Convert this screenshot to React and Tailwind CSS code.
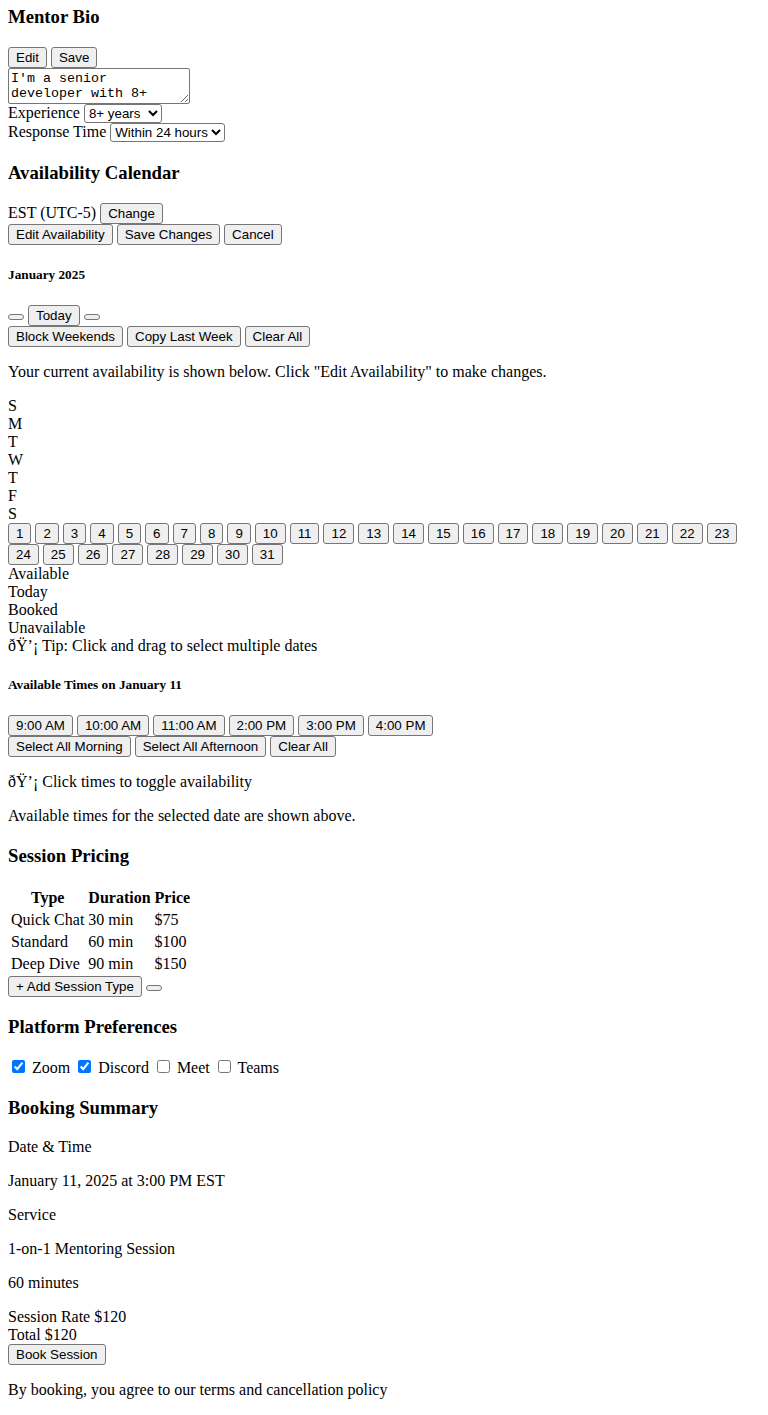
import { useState } from 'react';

const btn =
  "inline-block bg-[#efefef] border border-[#767676] rounded-[3px] px-[7px] py-[2px] font-['Liberation_Sans',Arial,sans-serif] text-[13.333px] leading-[normal] text-black";
const sel =
  "bg-white border border-[#767676] rounded-[3px] font-['Liberation_Sans',Arial,sans-serif] text-[13.333px] leading-[normal] text-black";
const h3 = 'text-[18.72px] font-bold leading-[normal] my-[18.72px]';
const h5 = 'text-[13.28px] font-bold leading-[normal] my-[22.18px]';

const days = ['S', 'M', 'T', 'W', 'T', 'F', 'S'];
const dates = Array.from({ length: 31 }, (_, i) => i + 1);
const times = ['9:00 AM', '10:00 AM', '11:00 AM', '2:00 PM', '3:00 PM', '4:00 PM'];
const sessions = [
  ['Quick Chat', '30 min', '$75'],
  ['Standard', '60 min', '$100'],
  ['Deep Dive', '90 min', '$150'],
];
const platforms = [
  ['Zoom', true],
  ['Discord', true],
  ['Meet', false],
  ['Teams', false],
];

export default function App() {
  const [bio, setBio] = useState(
    "I'm a senior developer with 8+ years of experience building web applications."
  );

  return (
    <div className="px-2 pb-[16px] font-['Liberation_Serif','Times_New_Roman',serif] text-[16px] leading-[normal] text-black bg-white">
      {/* Mentor bio */}
      <h3 className={`${h3} !mt-[6px]`}>Mentor Bio</h3>
      <div className="flex items-baseline gap-x-1">
        <button className={btn}>Edit</button>
        <button className={btn}>Save</button>
      </div>
      <textarea
        value={bio}
        onChange={(e) => setBio(e.target.value)}
        className="block w-[182px] h-[36px] border border-[#767676] rounded-[2px] pl-[2px] pr-[18px] py-[2px] font-['Liberation_Mono','Courier_New',monospace] text-[13.333px] leading-[normal] overflow-hidden"
      />
      <div className="flex items-baseline gap-x-1">
        <span>Experience</span>
        <select className={sel} defaultValue="8+">
          <option value="1-3">1-3 years</option>
          <option value="3-5">3-5 years</option>
          <option value="5-8">5-8 years</option>
          <option value="8+">8+ years</option>
        </select>
      </div>
      <div className="flex items-baseline gap-x-1">
        <span>Response Time</span>
        <select className={sel} defaultValue="24">
          <option value="1">Within 1 hour</option>
          <option value="12">Within 12 hours</option>
          <option value="24">Within 24 hours</option>
        </select>
      </div>

      {/* Calendar */}
      <h3 className={`${h3} !mt-[20.2px]`}>Availability Calendar</h3>
      <div className="flex items-baseline gap-x-1">
        <span>EST (UTC-5)</span>
        <button className={btn}>Change</button>
      </div>
      <div className="flex items-baseline gap-x-1">
        <button className={btn}>Edit Availability</button>
        <button className={btn}>Save Changes</button>
        <button className={btn}>Cancel</button>
      </div>
      <h5 className={h5}>January 2025</h5>
      <div className="flex items-baseline gap-x-1">
        <button className={btn} aria-label="Previous month"></button>
        <button className={btn}>Today</button>
        <button className={btn} aria-label="Next month"></button>
      </div>
      <div className="flex items-baseline gap-x-1">
        <button className={btn}>Block Weekends</button>
        <button className={btn}>Copy Last Week</button>
        <button className={btn}>Clear All</button>
      </div>
      <p className="my-4">
        Your current availability is shown below. Click "Edit Availability" to make changes.
      </p>
      <div>
        {days.map((d, i) => (
          <div key={i}>{d}</div>
        ))}
      </div>
      <div className="flex flex-wrap items-baseline gap-x-1">
        {dates.map((d) => (
          <button key={d} className={btn}>
            {d}
          </button>
        ))}
      </div>
      <div>
        <div>Available</div>
        <div>Today</div>
        <div>Booked</div>
        <div>Unavailable</div>
      </div>
      <div>{'\u00F0\u0178\u2019\u00A1'} Tip: Click and drag to select multiple dates</div>

      {/* Times */}
      <h5 className={h5}>Available Times on January 11</h5>
      <div className="flex flex-wrap items-baseline gap-x-1">
        {times.map((t) => (
          <button key={t} className={btn}>
            {t}
          </button>
        ))}
      </div>
      <div className="flex items-baseline gap-x-1">
        <button className={btn}>Select All Morning</button>
        <button className={btn}>Select All Afternoon</button>
        <button className={btn}>Clear All</button>
      </div>
      <p className="my-4">{'\u00F0\u0178\u2019\u00A1'} Click times to toggle availability</p>
      <p className="my-4">Available times for the selected date are shown above.</p>

      {/* Pricing */}
      <h3 className={`${h3} !mt-[19.5px]`}>Session Pricing</h3>
      <table className="border-separate border-spacing-[2px]">
        <thead>
          <tr>
            <th className="p-px font-bold text-center">Type</th>
            <th className="p-px font-bold text-center">Duration</th>
            <th className="p-px font-bold text-center">Price</th>
          </tr>
        </thead>
        <tbody>
          {sessions.map((s) => (
            <tr key={s[0]}>
              {s.map((c, i) => (
                <td key={i} className="p-px text-left">
                  {c}
                </td>
              ))}
            </tr>
          ))}
        </tbody>
      </table>
      <div className="flex items-baseline gap-x-1">
        <button className={btn}>+ Add Session Type</button>
        <button className={btn} aria-label="More"></button>
      </div>

      {/* Platforms */}
      <h3 className={`${h3} !mt-[19.72px]`}>Platform Preferences</h3>
      <div>
        {platforms.map(([name, on], i) => (
          <span key={name}>
            <label>
              <input
                type="checkbox"
                defaultChecked={on}
                className="inline-block w-[13px] h-[13px] mt-[3px] mr-[3px] mb-[3px] ml-[4px] align-baseline"
              />{' '}
              {name}
            </label>
            {i < platforms.length - 1 ? ' ' : ''}
          </span>
        ))}
      </div>

      {/* Summary */}
      <h3 className={`${h3} !mt-[19.72px] !mb-[19.72px]`}>Booking Summary</h3>
      <p className="my-4">Date &amp; Time</p>
      <p className="my-4">January 11, 2025 at 3:00 PM EST</p>
      <p className="my-4">Service</p>
      <p className="my-4">1-on-1 Mentoring Session</p>
      <p className="my-4">60 minutes</p>
      <div>
        <span>Session Rate</span> <span>$120</span>
      </div>
      <div>
        <span>Total</span> <span>$120</span>
      </div>
      <button className={btn}>Book Session</button>
      <p className="my-4">By booking, you agree to our terms and cancellation policy</p>
    </div>
  );
}
